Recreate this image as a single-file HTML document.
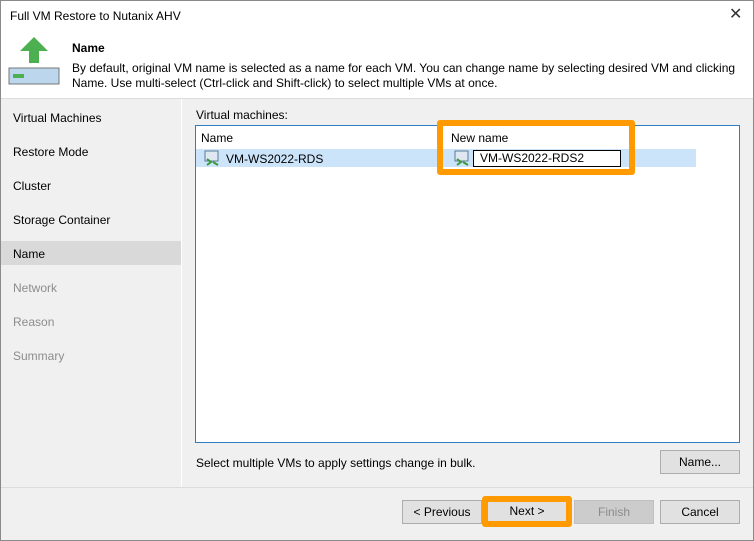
<!DOCTYPE html><html><head><style>
body{margin:0;width:754px;height:541px;overflow:hidden;font-family:"Liberation Sans",sans-serif;font-size:12px;color:#000;background:#f0f0f0}
.win{position:absolute;left:0;top:0;width:752px;height:539px;border:1px solid #8a8a8a;background:#f0f0f0}
.a{position:absolute}
.btn{position:absolute;height:22px;border:1px solid #adadad;background:#e1e1e1;text-align:center;line-height:22px;box-sizing:border-box;height:24px}
.nav{position:absolute;left:12px}
</style></head><body><div class="win">
<div class="a" style="left:0;top:0;width:752px;height:97px;background:#fff;border-bottom:1px solid #dcdcdc"></div>
<div class="a" style="left:9px;top:8px;font-size:12px">Full VM Restore to Nutanix AHV</div>
<div class="a" style="left:728px;top:3px;font-size:16px;color:#333">✕</div>
<svg class="a" style="left:7px;top:35px" width="52" height="50"><polygon points="26,1 40,15 31,15 31,27 21,27 21,15 12,15" fill="#4caf50"/><rect x="1" y="32" width="50" height="16" fill="#bcd6ee" stroke="#777" stroke-width="1"/><rect x="5" y="38" width="11" height="4" fill="#4caf50"/></svg>
<div class="a" style="left:71px;top:40px;font-weight:bold">Name</div>
<div class="a" style="left:71px;top:60px;line-height:15px;width:680px">By default, original VM name is selected as a name for each VM. You can change name by selecting desired VM and clicking Name. Use multi-select (Ctrl-click and Shift-click) to select multiple VMs at once.</div>
<div class="a" style="left:180px;top:98px;width:1px;height:388px;background:#fff"></div>
<div class="a" style="left:0;top:240px;width:180px;height:24px;background:#d9d9d9"></div>
<div class="nav" style="top:110px">Virtual Machines</div>
<div class="nav" style="top:144px">Restore Mode</div>
<div class="nav" style="top:178px">Cluster</div>
<div class="nav" style="top:212px">Storage Container</div>
<div class="nav" style="top:246px">Name</div>
<div class="nav" style="top:280px;color:#8c8c8c">Network</div>
<div class="nav" style="top:314px;color:#8c8c8c">Reason</div>
<div class="nav" style="top:348px;color:#8c8c8c">Summary</div>
<div class="a" style="left:195px;top:107px">Virtual machines:</div>
<div class="a" style="left:194px;top:124px;width:543px;height:316px;background:#fff;border:1px solid #2f7cc0"></div>
<div class="a" style="left:195px;top:148px;width:500px;height:18px;background:#cce4fa"></div>
<div class="a" style="left:200px;top:130px">Name</div>
<div class="a" style="left:450px;top:130px">New name</div>
<svg class="a" style="left:203px;top:149px" width="16" height="16"><rect x="1" y="1" width="13" height="10" fill="#dfe8f0" stroke="#5a7a96"/><path d="M3 9l4 3-4 3M9 12l5 3" stroke="#3a9a3a" stroke-width="2" fill="none"/></svg>
<div class="a" style="left:225px;top:151px">VM-WS2022-RDS</div>
<svg class="a" style="left:453px;top:149px" width="16" height="16"><rect x="1" y="1" width="13" height="10" fill="#dfe8f0" stroke="#5a7a96"/><path d="M3 9l4 3-4 3M9 12l5 3" stroke="#3a9a3a" stroke-width="2" fill="none"/></svg>
<div class="a" style="left:472px;top:149px;width:148px;height:15px;border:1px solid #000;background:#fff;line-height:15px;padding-left:6px;box-sizing:border-box;height:17px">VM-WS2022-RDS2</div>
<div class="a" style="left:436px;top:119px;width:186px;height:43px;border:6px solid #ff9a00;border-radius:3px"></div>
<div class="a" style="left:195px;top:455px">Select multiple VMs to apply settings change in bulk.</div>
<div class="btn" style="left:659px;top:449px;width:80px">Name...</div>
<div class="a" style="left:0;top:486px;width:752px;height:1px;background:#dcdcdc"></div>
<div class="btn" style="left:401px;top:499px;width:80px">&lt; Previous</div>
<div class="btn" style="left:481px;top:499px;width:90px;border:6px solid #ff9a00;border-radius:3px;height:31px;top:495px;line-height:19px">Next &gt;</div>
<div class="btn" style="left:573px;top:499px;width:80px;background:#ccc;color:#8c8c8c;border-color:#bfbfbf">Finish</div>
<div class="btn" style="left:659px;top:499px;width:80px">Cancel</div>
</div></body></html>
